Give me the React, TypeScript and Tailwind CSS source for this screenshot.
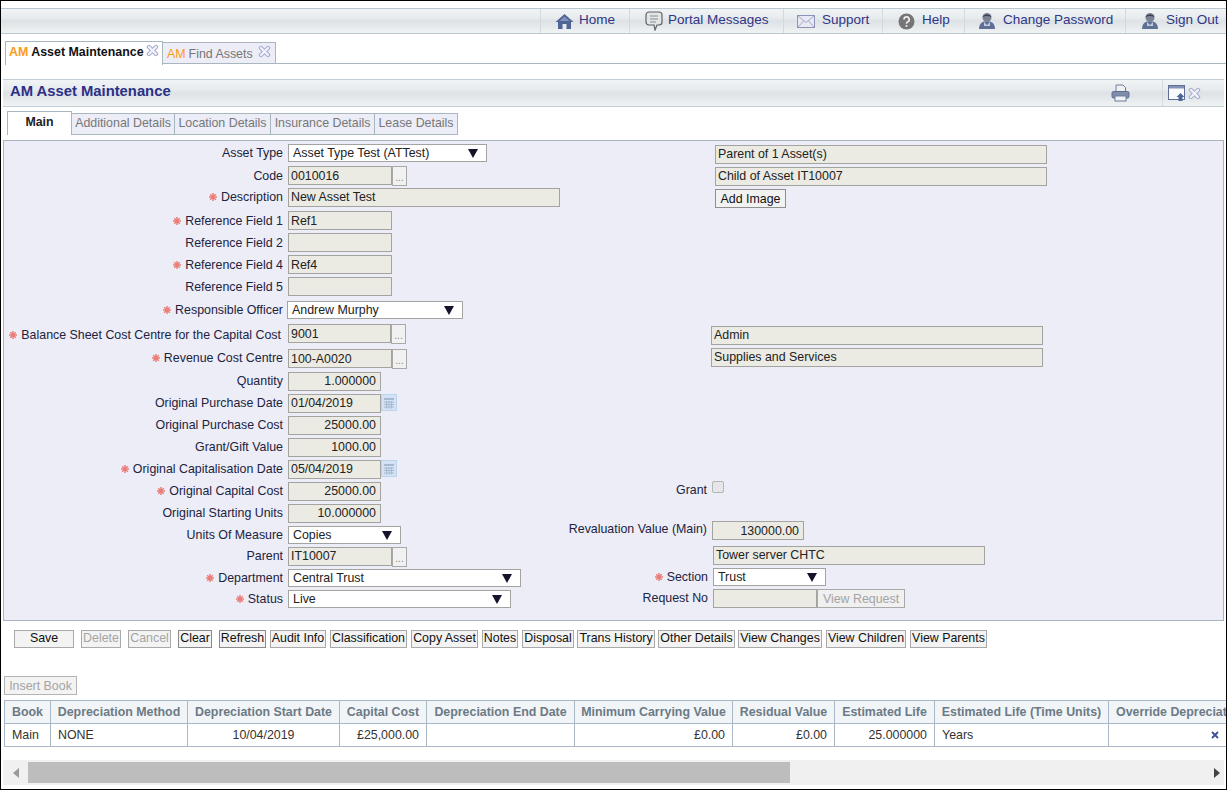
import type { ReactNode } from "react";

const barBg =
  "bg-[linear-gradient(to_bottom,#f1f4f5_0%,#e9ecef_35%,#dde2e6_50%,#e6eaec_75%,#f0f3f4_100%)]";

function CloseIcon({ className = "" }: { className?: string }) {
  return (
    <svg width="13" height="13" viewBox="0 0 13 13" className={className}>
      <path d="M3 3l7 7M10 3l-7 7" stroke="#a9aed2" strokeWidth="4.4" strokeLinecap="round" />
      <path d="M3 3l7 7M10 3l-7 7" stroke="#f2f3fa" strokeWidth="2.2" strokeLinecap="round" />
    </svg>
  );
}

function HomeIcon() {
  return (
    <svg width="19" height="17" viewBox="0 0 19 17">
      <path d="M9.5 1L0.5 9h2.5v7h4.5v-5h4v5H16V9h2.5z" fill="#4f6596" />
      <path d="M9.5 3.5L4.5 8h10z" fill="#7f93bb" />
      <rect x="8.5" y="11.5" width="2" height="4.5" fill="#e6eaf0" />
    </svg>
  );
}

function BubbleIcon() {
  return (
    <svg width="18" height="20" viewBox="0 0 18 20">
      <path d="M4 1h10a3 3 0 0 1 3 3v7a3 3 0 0 1-3 3h-2l-2 5-1-5H4a3 3 0 0 1-3-3V4a3 3 0 0 1 3-3z" fill="#e3e5e6" stroke="#5c6268" strokeWidth="1.2" />
      <path d="M5 5h8M5 8h8M5 11h6" stroke="#8a8f94" strokeWidth="1" />
    </svg>
  );
}

function MailIcon() {
  return (
    <svg width="18" height="13" viewBox="0 0 18 13">
      <rect x="0.5" y="0.5" width="17" height="12" fill="#e8e9f3" stroke="#8d93b8" />
      <path d="M1 1l8 6.5L17 1M1 12l5.5-6M17 12l-5.5-6" fill="none" stroke="#a5aac8" />
    </svg>
  );
}

function HelpIcon() {
  return (
    <svg width="17" height="17" viewBox="0 0 17 17">
      <circle cx="8.5" cy="8.5" r="8" fill="#757575" />
      <path d="M6 6.5a2.6 2.6 0 1 1 3.7 2.3c-.9.5-1.2 1-1.2 2" fill="none" stroke="#eee" strokeWidth="1.7" />
      <rect x="7.6" y="12" width="1.8" height="1.8" fill="#eee" />
    </svg>
  );
}

function UserIcon() {
  return (
    <svg width="18" height="18" viewBox="0 0 18 18">
      <path d="M1 17c0-4 1.5-6.5 5-7.5h6c3.5 1 5 3.500 5 7.500z" fill="#5f7096" />
      <circle cx="9" cy="5.500" r="4.500" fill="#7b8294" />
      <path d="M4.500 5c1-3.500 8-3.500 9 0-3-1.500-6-1.500-9 0z" fill="#3a3f4c" />
      <path d="M6 10l3 3 3-3v4H6z" fill="#c3cad8" />
    </svg>
  );
}

function PrintIcon() {
  return (
    <svg width="19" height="18" viewBox="0 0 19 18">
      <path d="M5 1h7l2.500 2.500V8h-9.500z" fill="#eef0f4" stroke="#6d7c9b" />
      <rect x="1" y="7.500" width="17" height="6.500" rx="1.500" fill="#7f8daa" stroke="#5d6c8c" />
      <rect x="4" y="12" width="11" height="5" fill="#f0f2f6" stroke="#6d7c9b" />
    </svg>
  );
}

function WindowIcon() {
  return (
    <svg width="18" height="17" viewBox="0 0 18 17">
      <rect x="0.500" y="0.500" width="16" height="14" fill="#fafafd" stroke="#5f6f95" />
      <rect x="1" y="1" width="15" height="2.500" fill="#8593b5" />
      <path d="M12.500 8l4 4h-2v4h-4v-4h-2z" fill="#4f6596" />
    </svg>
  );
}

function CalendarIcon() {
  return (
    <svg width="16" height="17" viewBox="0 0 16 17">
      <rect x="0.500" y="0.500" width="15" height="16" fill="#d3e3f5" stroke="#bcd4ee" />
      <rect x="3" y="4" width="10" height="2" fill="#a9b9cd" />
      <path d="M3 8h10M3 10.500h10M3 13h10M5.500 7v7.500M8 7v7.500M10.500 7v7.500" stroke="#a9b9cd" />
    </svg>
  );
}

function Triangle() {
  return (
    <svg width="10" height="9" viewBox="0 0 10 9" className="shrink-0">
      <path d="M0 0h10L5 9z" fill="#14142a" />
    </svg>
  );
}

function Star() {
  return (
    <svg width="8" height="8" viewBox="0 0 8 8" className="mr-[4px] shrink-0">
      <path d="M4 0v8M0 4h8M1.200 1.200l5.600 5.600M6.800 1.200L1.200 6.800" stroke="#ea7f7a" strokeWidth="1.500" />
    </svg>
  );
}

function Label({ children, req, className = "" }: { children: ReactNode; req?: boolean; className?: string }) {
  return (
    <div className={`flex h-[18px] items-center justify-end whitespace-nowrap text-[#1d2340] ${className}`}>
      {req && <Star />}
      <span>{children}</span>
    </div>
  );
}

function Field({ value, className = "", right }: { value: string; className?: string; right?: boolean }) {
  return (
    <input
      readOnly
      value={value}
      className={`block h-[19px] border border-[#a3a3a0] bg-[#ebeae3] text-[#222] outline-none ${right ? "pr-[4px] text-right" : "pl-[2px]"} ${className}`}
    />
  );
}

function Dropdown({ value, className = "" }: { value: string; className?: string }) {
  return (
    <div className={`flex h-[18px] items-center justify-between border border-[#a3a3a0] bg-white pl-[4px] pr-[8px] text-[#222] ${className}`}>
      <span>{value}</span>
      <Triangle />
    </div>
  );
}

function Browse() {
  return (
    <button className="h-[20px] w-[15px] border border-[#a9a9a9] bg-[#f1f1f1] pt-[3px] text-[10px] leading-none text-[#888]">
      ...
    </button>
  );
}

function Row({ className, label, field, sideLabel, side }: { className: string; label?: ReactNode; field?: ReactNode; sideLabel?: ReactNode; side?: ReactNode }) {
  return (
    <div className={`grid grid-cols-[279px_277px_151px_1fr] ${className}`}>
      <div>{label}</div>
      <div className="pl-[5px]">{field}</div>
      <div className="pr-[4px]">{sideLabel}</div>
      <div>{side}</div>
    </div>
  );
}

const navItems = [
  { label: "Home", icon: <HomeIcon />, cls: "w-[89px] pl-[14px] gap-[5px]" },
  { label: "Portal Messages", icon: <BubbleIcon />, cls: "w-[154px] pl-[15px] gap-[5px]" },
  { label: "Support", icon: <MailIcon />, cls: "w-[99px] pl-[13px] gap-[7px]" },
  { label: "Help", icon: <HelpIcon />, cls: "w-[82px] pl-[15px] gap-[7px]" },
  { label: "Change Password", icon: <UserIcon />, cls: "w-[161px] pl-[13px] gap-[7px]" },
  { label: "Sign Out", icon: <UserIcon />, cls: "w-[101px] pl-[15px] gap-[7px]" },
];

const subTabs = [
  { label: "Additional Details", cls: "w-[103px]" },
  { label: "Location Details", cls: "w-[96px]" },
  { label: "Insurance Details", cls: "w-[104px]" },
  { label: "Lease Details", cls: "w-[83px]" },
];

const actions = [
  { label: "Save", cls: "w-[60px]" },
  { label: "Delete", cls: "w-[40px] ml-[7px]", off: true },
  { label: "Cancel", cls: "w-[43px] ml-[7px]", off: true },
  { label: "Clear", cls: "w-[34px] ml-[7px]", dark: true },
  { label: "Refresh", cls: "w-[47px] ml-[7px]", dark: true },
  { label: "Audit Info", cls: "w-[56px] ml-[4px]" },
  { label: "Classification", cls: "w-[77px] ml-[4px]" },
  { label: "Copy Asset", cls: "w-[67px] ml-[4px]" },
  { label: "Notes", cls: "w-[36px] ml-[4px]" },
  { label: "Disposal", cls: "w-[52px] ml-[4px]" },
  { label: "Trans History", cls: "w-[78px] ml-[3px]" },
  { label: "Other Details", cls: "w-[77px] ml-[3px]" },
  { label: "View Changes", cls: "w-[84px] ml-[3px]" },
  { label: "View Children", cls: "w-[80px] ml-[4px]" },
  { label: "View Parents", cls: "w-[77px] ml-[4px]" },
];

const columns = [
  { label: "Book", cls: "w-[46px] text-center" },
  { label: "Depreciation Method", cls: "w-[137px] text-center" },
  { label: "Depreciation Start Date", cls: "w-[152px] text-center" },
  { label: "Capital Cost", cls: "w-[87px] text-center" },
  { label: "Depreciation End Date", cls: "w-[148px] text-center" },
  { label: "Minimum Carrying Value", cls: "w-[158px] text-center" },
  { label: "Residual Value", cls: "w-[102px] text-center" },
  { label: "Estimated Life", cls: "w-[100px] text-center" },
  { label: "Estimated Life (Time Units)", cls: "w-[174px] text-center" },
  { label: "Override Depreciation", cls: "w-[180px] pl-[7px] text-left" },
];

export default function App() {
  const cell = "border border-[#a9b7c6] px-[7px] h-[23px] text-[#333]";

  return (
    <div className="h-[790px] w-[1227px] overflow-hidden border border-black bg-white font-['Liberation_Sans',Arial,sans-serif] text-[12.4px]">
      {/* top nav */}
      <div className={`mt-[7px] flex h-[26px] justify-end border-y border-[#b9c7d0] ${barBg}`}>
        {navItems.map((item) => (
          <a key={item.label} className={`flex items-center border-l border-[#d3d9dd] text-[13.5px] text-[#2f3684] ${item.cls}`}>
            {item.icon}
            <span className="pb-[1px]">{item.label}</span>
          </a>
        ))}
      </div>

      {/* document tabs */}
      <div className="mt-[7px] flex h-[24px] pl-[4px]">
        <div className="flex h-[24px] w-[158px] items-start gap-[3px] border-x border-t border-[#a8b6c0] bg-white pl-[3px] pt-[1px] font-bold whitespace-nowrap">
          <span className="text-[#ff9a1a]">AM</span>
          <span className="text-[#111]">Asset Maintenance</span>
          <CloseIcon className="mt-[1px] -ml-[1px]" />
        </div>
        <div className="flex h-[23px] flex-1 border-b border-[#a8b6c0]">
          <div className="mt-[1px] flex w-[113px] items-start gap-[3px] border-r border-t border-[#a8b6c0] bg-[#ecedf7] pl-[4px] pt-[2px]">
            <span className="text-[#ff9a1a]">AM</span>
            <span className="text-[#777]">Find Assets</span>
            <CloseIcon className="ml-[2px]" />
          </div>
        </div>
      </div>

      {/* title bar */}
      <div className={`mx-[2px] mt-[14px] flex h-[28px] items-center justify-between border-y border-[#c3cdd4] ${barBg}`}>
        <h1 className="pb-[3px] pl-[7px] text-[14.8px] font-bold text-[#2b3087]">AM Asset Maintenance</h1>
        <div className="flex h-full items-center">
          <div className="mr-[32px]"><PrintIcon /></div>
          <div className="flex h-full w-[62px] items-center gap-[2px] border-l border-[#d3d9dd] pl-[5px]">
            <WindowIcon />
            <CloseIcon />
          </div>
        </div>
      </div>

      {/* sub tabs */}
      <div className="mt-[4px] flex h-[24px] items-end pl-[6px]">
        <div className="flex h-[24px] w-[65px] items-center justify-center border-x border-t border-[#a8b6c0] bg-white pb-[2px] font-bold text-[#222]">
          Main
        </div>
        {subTabs.map((tab) => (
          <div key={tab.label} className={`flex h-[22px] items-center justify-center border-y border-r border-[#a8b6c0] bg-[#ecedf7] pb-[2px] whitespace-nowrap text-[#777] ${tab.cls}`}>
            {tab.label}
          </div>
        ))}
      </div>

      {/* form panel */}
      <div className="mx-[2px] mt-[5px] h-[481px] border border-[#a9b4c0] bg-[#ecedf7] pt-[3px]">
        <Row className="h-[22px]" label={<Label>Asset Type</Label>} field={<Dropdown value="Asset Type Test (ATTest)" className="w-[199px]" />} side={<Field value="Parent of 1 Asset(s)" className="mt-[1px] ml-[4px] w-[332px] pb-[2px]" />} />
        <Row className="h-[22px]" label={<Label className="mt-[1px]">Code</Label>} field={<div className="flex"><Field value="0010016" className="w-[104px]" /><Browse /></div>} side={<Field value="Child of Asset IT10007" className="mt-[1px] ml-[4px] w-[332px] pb-[2px]" />} />
        <Row className="h-[23px]" label={<Label req>Description</Label>} field={<Field value="New Asset Test" className="w-[272px] pb-[2px]" />} side={<button className="mt-[1px] ml-[4px] h-[19px] w-[71px] border border-[#8f8f8f] bg-[#f2f2f2] pb-[1px] text-[#111]">Add Image</button>} />
        <Row className="h-[22px]" label={<Label req className="mt-[1px]">Reference Field 1</Label>} field={<Field value="Ref1" className="w-[104px]" />} />
        <Row className="h-[22px]" label={<Label className="mt-[1px]">Reference Field 2</Label>} field={<Field value="" className="w-[104px]" />} />
        <Row className="h-[22px]" label={<Label req className="mt-[1px]">Reference Field 4</Label>} field={<Field value="Ref4" className="w-[104px]" />} />
        <Row className="h-[24px]" label={<Label className="mt-[1px]">Reference Field 5</Label>} field={<Field value="" className="w-[104px]" />} />
        <Row className="h-[23px]" label={<Label req>Responsible Officer</Label>} field={<Dropdown value="Andrew Murphy" className="-ml-[1px] w-[176px]" />} />
        <Row className="h-[25px]" label={<div className="mt-[2px] pr-[2px]"><Label req>Balance Sheet Cost Centre for the Capital Cost</Label></div>} field={<div className="flex"><Field value="9001" className="w-[103px]" /><Browse /></div>} side={<Field value="Admin" className="mt-[2px] w-[332px] pb-[2px]" />} />
        <Row className="h-[23px]" label={<Label req>Revenue Cost Centre</Label>} field={<div className="flex"><Field value="100-A0020" className="w-[104px]" /><Browse /></div>} side={<Field value="Supplies and Services" className="-mt-[1px] w-[332px] pb-[2px]" />} />
        <Row className="h-[22px]" label={<Label>Quantity</Label>} field={<Field right value="1.000000" className="w-[93px] pb-[2px]" />} />
        <Row className="h-[22px]" label={<Label>Original Purchase Date</Label>} field={<div className="flex"><Field value="01/04/2019" className="w-[93px] pb-[2px]" /><CalendarIcon /></div>} />
        <Row className="h-[22px]" label={<Label>Original Purchase Cost</Label>} field={<Field right value="25000.00" className="w-[93px] pb-[2px]" />} />
        <Row className="h-[22px]" label={<Label>Grant/Gift Value</Label>} field={<Field right value="1000.00" className="w-[93px] pb-[2px]" />} />
        <Row className="h-[22px]" label={<Label req>Original Capitalisation Date</Label>} field={<div className="flex"><Field value="05/04/2019" className="w-[93px] pb-[2px]" /><CalendarIcon /></div>} />
        <Row className="h-[22px]" label={<Label req>Original Capital Cost</Label>} field={<Field right value="25000.00" className="w-[93px] pb-[2px]" />} sideLabel={<div className="-mt-[1px]"><Label>Grant</Label></div>} side={<div className="mt-[-1px] ml-[1px] size-[12px] rounded-[2px] border border-[#b5b5b5] bg-[#e6e6e8]" />} />
        <Row className="h-[22px]" label={<Label>Original Starting Units</Label>} field={<Field right value="10.000000" className="w-[93px] pb-[2px]" />} />
        <Row className="h-[21px]" label={<Label>Units Of Measure</Label>} field={<Dropdown value="Copies" className="w-[113px]" />} sideLabel={<div className="-mt-[6px]"><Label>Revaluation Value (Main)</Label></div>} side={<Field right value="130000.00" className="-mt-[5px] ml-[1px] w-[92px]" />} />
        <Row className="h-[22px]" label={<Label>Parent</Label>} field={<div className="flex"><Field value="IT10007" className="w-[104px] pb-[2px]" /><Browse /></div>} side={<Field value="Tower server CHTC" className="-mt-[1px] ml-[2px] w-[272px] pb-[2px]" />} />
        <Row className="h-[21px]" label={<Label req>Department</Label>} field={<Dropdown value="Central Trust" className="w-[233px]" />} sideLabel={<div className="-mt-[1px] -mr-[1px]"><Label req>Section</Label></div>} side={<Dropdown value="Trust" className="-mt-[1px] ml-[2px] w-[113px]" />} />
        <Row className="h-[22px]" label={<Label req>Status</Label>} field={<Dropdown value="Live" className="w-[223px]" />} sideLabel={<div className="-mt-[1px] -mr-[1px]"><Label>Request No</Label></div>} side={<div className="-mt-[1px] ml-[2px] flex"><Field value="" className="w-[104px]" /><button className="h-[19px] w-[88px] border border-[#a9a9a9] bg-[#f0f0f0] pb-[1px] text-[#a3a3a3]">View Request</button></div>} />
      </div>

      {/* action buttons */}
      <div className="mt-[9px] flex pl-[13px]">
        {actions.map((a) => (
          <button key={a.label} className={`h-[18px] whitespace-nowrap border bg-[#f3f3f3] pb-[2px] leading-none ${a.dark ? "border-[#8a8a8a]" : "border-[#a9a9a9]"} ${a.off ? "text-[#a5a5a5]" : "text-[#111]"} ${a.cls}`}>
            {a.label}
          </button>
        ))}
      </div>

      <button className="mt-[28px] ml-[3px] block h-[19px] w-[73px] border border-[#b4b4b4] bg-[#f3f3f3] pb-[3px] text-[#a3a3a3]">Insert Book</button>

      {/* books table */}
      <div className="mt-[5px] ml-[3px] overflow-hidden">
        <table className="w-[1284px] table-fixed border-collapse">
          <thead>
            <tr className="bg-[#f2f5f7]">
              {columns.map((c) => (
                <th key={c.label} className={`h-[23px] border border-[#a9b7c6] font-bold whitespace-nowrap text-[#6c7a86] ${c.cls}`}>
                  {c.label}
                </th>
              ))}
            </tr>
          </thead>
          <tbody>
            <tr>
              <td className={cell}>Main</td>
              <td className={cell}>NONE</td>
              <td className={`${cell} text-center`}>10/04/2019</td>
              <td className={`${cell} text-right`}>£25,000.00</td>
              <td className={cell}></td>
              <td className={`${cell} text-right`}>£0.00</td>
              <td className={`${cell} text-right`}>£0.00</td>
              <td className={`${cell} text-right`}>25.000000</td>
              <td className={cell}>Years</td>
              <td className={cell}>
                <svg width="8" height="8" viewBox="0 0 8 8" className="ml-[95px]">
                  <path d="M1 1l6 6M7 1L1 7" stroke="#3d4ba0" strokeWidth="1.800" />
                </svg>
              </td>
            </tr>
          </tbody>
        </table>
      </div>

      {/* scrollbar */}
      <div className="mx-[2px] mt-[13px] flex h-[25px] items-center justify-between bg-[#f0f0f0]">
        <div className="flex items-center">
          <div className="flex w-[25px] justify-center">
            <div className="h-0 w-0 border-y-[5px] border-r-[6px] border-y-transparent border-r-[#999]" />
          </div>
          <div className="h-[21px] w-[762px] bg-[#bdbdbd]" />
        </div>
        <div className="mr-[4px] h-0 w-0 border-y-[5px] border-l-[6px] border-y-transparent border-l-[#444]" />
      </div>
    </div>
  );
}
